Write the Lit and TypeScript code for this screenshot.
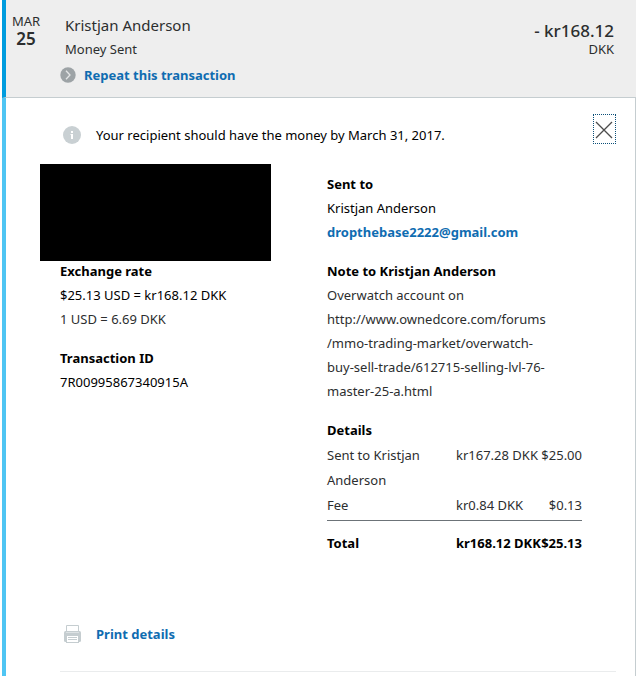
import { LitElement, html, css } from "lit";
import { customElement } from "lit/decorators.js";

const closeIcon = html`<svg width="19" height="18" viewBox="0 0 19 18" aria-hidden="true">
  <path d="M1 1 17 17M17 1 1 17" fill="none" stroke="#4c4c4c" stroke-width="1.3" />
</svg>`;

const repeatIcon = html`<svg width="16" height="16" viewBox="0 0 16 16" aria-hidden="true">
  <circle cx="8" cy="8" r="7.7" fill="#9da3a6" />
  <path d="M6 3.8 10 8 6 12.2" fill="none" stroke="#e4e6e7" stroke-width="1.3" />
</svg>`;

const infoIcon = html`<svg width="18" height="18" viewBox="0 0 18 18" aria-hidden="true">
  <circle cx="9" cy="9" r="9" fill="#c9d0d3" />
  <path d="M8 5h2v2H8zM7.5 8H10v5H8V9h-.5z" fill="#fff" />
</svg>`;

const printIcon = html`<svg width="17" height="18" viewBox="0 0 17 18" aria-hidden="true">
  <path d="M2.5 6V.5h12V6" fill="#fff" stroke="#c5cdd0" />
  <rect x="0" y="6" width="17" height="11" rx="1.5" fill="#c5cdd0" />
  <rect x="2" y="7" width="13" height="1" fill="#dde2e4" />
  <rect x="3" y="11" width="11" height="6" fill="#fff" />
  <path d="M4 12.5h9M4 14.5h9M2 17.5h13" stroke="#c5cdd0" />
</svg>`;

const charges = [
  { label: "Sent to Kristjan Anderson", amount: "kr167.28 DKK", usd: "$25.00" },
  { label: "Fee", amount: "kr0.84 DKK", usd: "$0.13" },
];

@customElement("app-root")
export class AppRoot extends LitElement {
  static styles = css`
    :host {
      display: block;
      min-height: 100vh;
      background: #fff;
      color: #2c2e2f;
      font: 13px/24px "Noto Sans", "Open Sans", sans-serif;
    }
    * {
      box-sizing: border-box;
    }
    .transaction {
      display: flex;
      flex-direction: column;
      min-height: 100vh;
      margin: 0 8px 0 2px;
    }
    .summary {
      display: flex;
      align-items: flex-start;
      min-height: 98px;
      padding-right: 22px;
      background: #eee;
      border-left: 4px solid #009cde;
      border-bottom: 1px solid #c5cdd0;
    }
    .date {
      display: flex;
      flex-direction: column;
      width: 40px;
      padding-top: 12px;
      text-align: center;
      line-height: 18px;
    }
    .day {
      font-size: 17px;
      font-weight: 600;
    }
    .who {
      flex: 1;
      padding: 13px 0 0 19px;
    }
    h1 {
      margin: 0;
      font-size: 15px;
      line-height: 24px;
      font-weight: 400;
    }
    .kind {
      margin: 0;
    }
    a {
      color: #0f6cb1;
      font-weight: 700;
      text-decoration: none;
    }
    .repeat {
      display: flex;
      align-items: center;
      gap: 8px;
      width: max-content;
      margin: 2px 0 0 -5px;
    }
    .amount {
      display: flex;
      flex-direction: column;
      padding-top: 22px;
      text-align: right;
      line-height: 18px;
    }
    .sum {
      font-size: 17px;
      font-weight: 500;
    }
    .details {
      flex: 1;
      padding: 16px 19px 0 54px;
      border-left: 4px solid #4fc5f3;
      border-right: 1px solid #c5cdd0;
    }
    .notice {
      display: flex;
      align-items: flex-start;
      color: #000;
    }
    .notice p {
      flex: 1;
      margin: 9px 0 0 15px;
    }
    .info {
      display: flex;
      margin: 12px 0 0 3px;
    }
    .close {
      display: flex;
      align-items: center;
      justify-content: center;
      width: 23px;
      height: 30px;
      padding: 2px 0 0;
      border: 1px dotted #0b4f78;
      background: none;
    }
    .columns {
      display: grid;
      grid-template-columns: 267fr 289fr;
      margin-top: 25px;
    }
    .redacted {
      width: 231px;
      height: 97px;
      margin: -8px 0 -2px -20px;
      background: #000;
    }
    section {
      margin-bottom: 15px;
    }
    h2 {
      margin: 0;
      color: #000;
      font-size: 13px;
      line-height: 24px;
      font-weight: 700;
    }
    p {
      margin: 0;
    }
    .strong {
      color: #000;
    }
    .right {
      padding-right: 34px;
    }
    .note {
      max-width: 232px;
    }
    table {
      width: 100%;
      margin-top: 1px;
      border-collapse: collapse;
      line-height: 25px;
      table-layout: fixed;
    }
    th,
    td {
      padding: 0;
      font-weight: 400;
      text-align: left;
      vertical-align: top;
      white-space: nowrap;
    }
    th {
      width: 129px;
      padding-right: 20px;
      white-space: normal;
    }
    .usd {
      width: 41px;
      text-align: right;
    }
    tbody tr:last-child > * {
      padding-bottom: 2px;
    }
    tfoot th,
    tfoot td {
      padding-top: 10px;
      border-top: 1px solid #6c7378;
      color: #000;
      font-weight: 700;
    }
    .print {
      display: flex;
      align-items: center;
      gap: 15px;
      width: max-content;
      margin: 51px 0 0 4px;
    }
    hr {
      margin: 25px 0 0;
      border: 0;
      border-top: 1px solid #eaeced;
    }
  `;

  render() {
    return html`
      <article class="transaction">
        <header class="summary">
          <time class="date" datetime="2017-03-25"><span>MAR</span><span class="day">25</span></time>
          <div class="who">
            <h1>Kristjan Anderson</h1>
            <p class="kind">Money Sent</p>
            <a class="repeat" href="#repeat">${repeatIcon}Repeat this transaction</a>
          </div>
          <div class="amount"><span class="sum">- kr168.12</span><span>DKK</span></div>
        </header>
        <div class="details">
          <div class="notice">
            <span class="info">${infoIcon}</span>
            <p>Your recipient should have the money by March 31, 2017.</p>
            <button class="close" type="button" aria-label="Close">${closeIcon}</button>
          </div>
          <div class="columns">
            <div>
              <div class="redacted"></div>
              <section>
                <h2>Exchange rate</h2>
                <p class="strong">$25.13 USD = kr168.12 DKK</p>
                <p>1 USD = 6.69 DKK</p>
              </section>
              <section>
                <h2>Transaction ID</h2>
                <p class="strong">7R00995867340915A</p>
              </section>
            </div>
            <div class="right">
              <section>
                <h2>Sent to</h2>
                <p class="strong">Kristjan Anderson</p>
                <a href="mailto:dropthebase2222@gmail.com">dropthebase2222@gmail.com</a>
              </section>
              <section>
                <h2>Note to Kristjan Anderson</h2>
                <p class="note">
                  Overwatch account on http://www.ownedcore.com/forums<wbr />/mmo-trading-market/overwatch-<wbr />buy-sell-trade/612715-selling-lvl-76-<wbr />master-25-a.html
                </p>
              </section>
              <section>
                <h2 id="charges">Details</h2>
                <table aria-labelledby="charges">
                  <tbody>
                    ${charges.map(
                      (c) => html`<tr>
                        <th scope="row">${c.label}</th>
                        <td>${c.amount}</td>
                        <td class="usd">${c.usd}</td>
                      </tr>`
                    )}
                  </tbody>
                  <tfoot>
                    <tr>
                      <th scope="row">Total</th>
                      <td>kr168.12 DKK</td>
                      <td class="usd">$25.13</td>
                    </tr>
                  </tfoot>
                </table>
              </section>
            </div>
          </div>
          <a class="print" href="#print">${printIcon}Print details</a>
          <hr />
        </div>
      </article>
    `;
  }
}
